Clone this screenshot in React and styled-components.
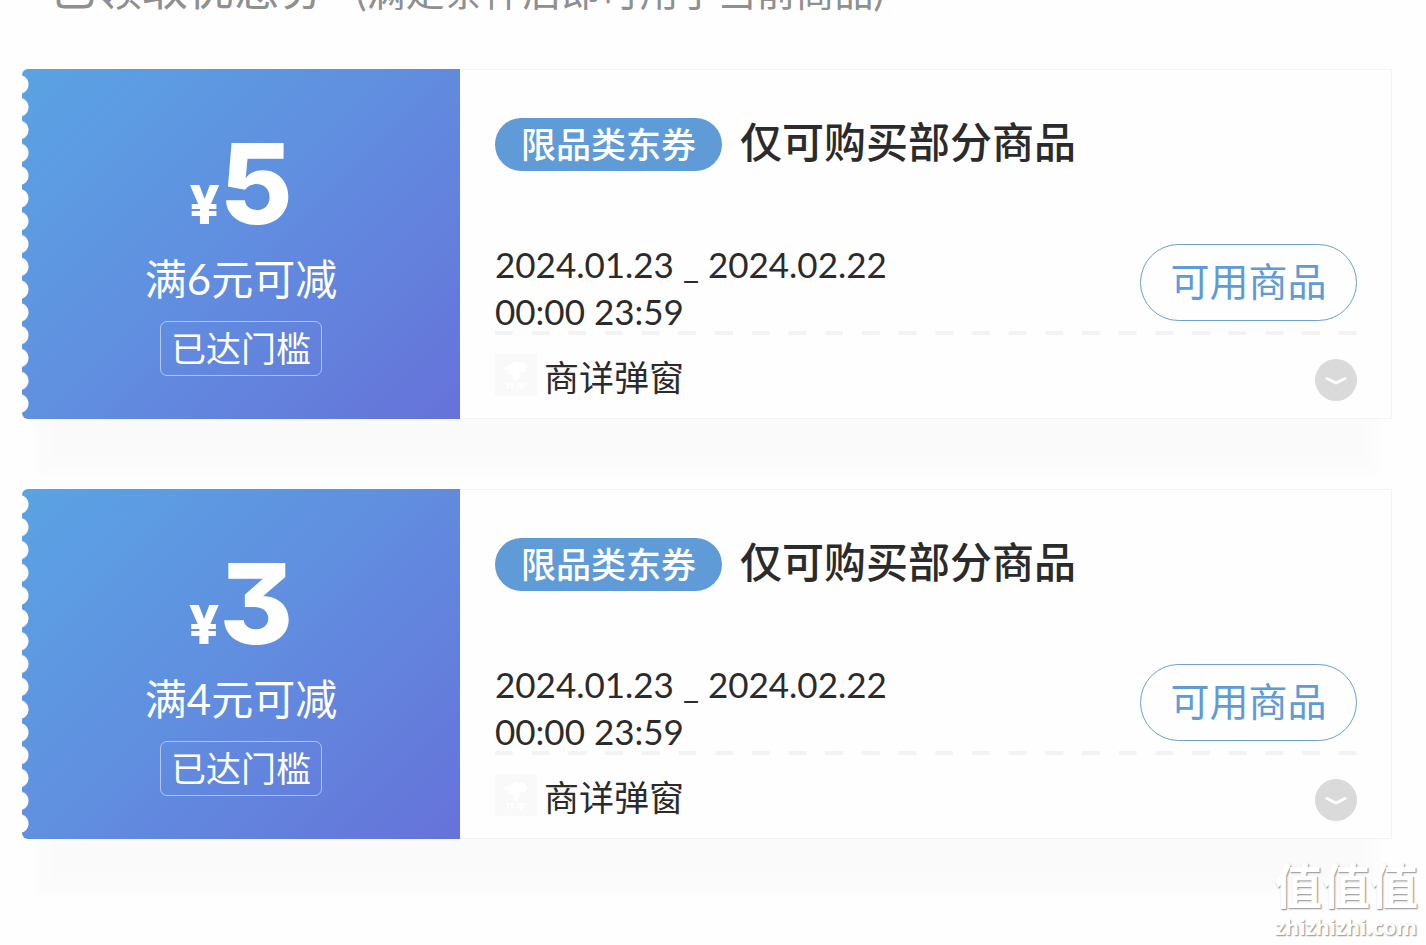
import React, { useState } from 'react';
import styled, { createGlobalStyle } from 'styled-components';

const GlobalStyle = createGlobalStyle`
    * {
        box-sizing: border-box;
    }

    body {
        margin: 0;
        background: #fefefe;
        color: #2b2b2b;
        font-family: Lato, 'Noto Sans CJK SC', sans-serif;
    }

    button {
        font-family: inherit;
        cursor: pointer;
    }
`;

const Page = styled.main`
    position: relative;
    min-height: 100vh;
    padding: 0 34px 106px 22px;
    overflow: hidden;
`;

const Header = styled.header`
    display: flex;
    align-items: flex-end;
    height: 20px;
    margin-bottom: 49px;
    padding-left: 28px;
    gap: 30px;
    color: #8f8f8f;
    overflow: hidden;
    white-space: nowrap;
`;

const Heading = styled.h1`
    margin: 0;
    font-size: 46px;
    font-weight: 400;
    line-height: 64px;
`;

const Hint = styled.span`
    font-size: 39px;
    line-height: 58px;
`;

const CouponList = styled.ul`
    display: flex;
    flex-direction: column;
    gap: 70px;
    margin: 0;
    padding: 0;
    list-style: none;
`;

const Coupon = styled.li`
    display: flex;
    box-shadow: 0 68px 12px -14px rgba(0, 0, 0, 0.014);
`;

const Stub = styled.div`
    display: flex;
    flex: 0 0 438px;
    border-radius: 6px 0 0 6px;
    background: linear-gradient(135deg, #5aa3e3 0%, #6090e0 45%, #6672d9 100%);
    color: #fff;
`;

const Perforation = styled.div`
    flex: 0 0 7px;
    margin: 4px 0;
    background: radial-gradient(circle at -3px 50%, #fefefe 9px, transparent 10px) 0 0 / 7px calc(100% / 15) repeat-y;
`;

const StubBody = styled.div`
    display: flex;
    flex: 1;
    flex-direction: column;
    align-items: center;
    padding: 72px 7px 0 0;
`;

const Amount = styled.div`
    display: flex;
    align-items: baseline;
    height: 84px;
    margin-bottom: 29px;
    font-family: Inter, 'Noto Sans CJK SC', sans-serif;
    font-feature-settings: 'cv09';
    font-weight: 800;
`;

const Currency = styled.span`
    font-size: 53px;
    line-height: 84px;
`;

const Value = styled.span`
    font-size: 112px;
    line-height: 84px;
`;

const Threshold = styled.div`
    margin-bottom: 17px;
    font-size: 42px;
    line-height: 50px;
`;

const Reached = styled.div`
    padding: 0 10px;
    border: 1px solid rgba(255, 255, 255, 0.5);
    border-radius: 7px;
    font-size: 35px;
    line-height: 53px;
`;

const Detail = styled.div`
    display: flex;
    flex: 1;
    flex-direction: column;
    min-width: 0;
    padding: 48px 34px 17px 35px;
    border: 1px solid #f3f3f3;
    border-left: 0;
    background: #fefefe;
`;

const TitleRow = styled.div`
    display: flex;
    align-items: flex-start;
    gap: 18px;
    height: 53px;
    margin-bottom: 70px;
`;

const Badge = styled.span`
    padding: 0 26px;
    border-radius: 27px;
    background: #5f9bd7;
    color: #fff;
    font-size: 35px;
    font-weight: 500;
    line-height: 53px;
`;

const Title = styled.h2`
    margin: 0;
    font-size: 42px;
    font-weight: 500;
    line-height: 48px;
`;

const DateRow = styled.div`
    display: flex;
    align-items: flex-start;
    justify-content: space-between;
    background: linear-gradient(90deg, #f3f3f5 18px, transparent 18px) 0 100% / calc((100% - 18px) / 23) 4px repeat-x;
`;

const Dates = styled.div`
    font-size: 35px;
    line-height: 47px;
`;

const UseButton = styled.button`
    width: 217px;
    height: 77px;
    margin-top: 3px;
    padding: 0 0 8px;
    border: 1px solid #6d9fd2;
    border-radius: 39px;
    background: transparent;
    color: #5f9bd7;
    font-size: 39px;
`;

const Footer = styled.div`
    display: flex;
    align-items: flex-start;
    gap: 7px;
    height: 66px;
    padding-top: 19px;
`;

const ShopIcon = styled.svg`
    width: 42px;
    height: 42px;
    background: #f9f9f9;
`;

const Source = styled.span`
    flex: 1;
    font-size: 35px;
    line-height: 47px;
`;

const Toggle = styled.button`
    display: flex;
    align-self: flex-end;
    width: 42px;
    height: 42px;
    padding: 0;
    border: 0;
    border-radius: 50%;
    background: #dadada;

    svg {
        transform: ${({ $open }) => ($open ? 'rotate(180deg)' : 'none')};
    }
`;

const Watermark = styled.div`
    position: absolute;
    right: 8px;
    bottom: 4px;
    color: #fff;
    text-align: center;
    text-shadow: 1px 1px 1px #a0a0a0, 1px 1px 2px #c4c4c4;
`;

const WatermarkName = styled.div`
    font-size: 48px;
    font-weight: 700;
    line-height: 54px;
`;

const WatermarkSite = styled.div`
    font-family: 'Open Sans', sans-serif;
    font-size: 21px;
    font-weight: 700;
    line-height: 28px;
`;

const coupons = [
    { id: 1, value: 5, threshold: '满6元可减' },
    { id: 2, value: 3, threshold: '满4元可减' },
];

const CouponCard = ({ value, threshold }) => {
    const [open, setOpen] = useState(false);

    return (
        <Coupon>
            <Stub>
                <Perforation />
                <StubBody>
                    <Amount>
                        <Currency>¥</Currency>
                        <Value>{value}</Value>
                    </Amount>
                    <Threshold>{threshold}</Threshold>
                    <Reached>已达门槛</Reached>
                </StubBody>
            </Stub>
            <Detail>
                <TitleRow>
                    <Badge>限品类东券</Badge>
                    <Title>仅可购买部分商品</Title>
                </TitleRow>
                <DateRow>
                    <Dates>
                        2024.01.23 _ 2024.02.22
                        <br />
                        00:00 23:59
                    </Dates>
                    <UseButton type="button">可用商品</UseButton>
                </DateRow>
                <Footer>
                    <ShopIcon viewBox="0 0 42 42" aria-hidden="true">
                        <path d="M9 14c3-1 4-4 8-4 2-3 6-3 8-1 3-2 7 0 7 4 0 4-3 5-6 5l-2 2 1 4-4 3-4-2 2-3-2-2-4 1 1-4-5-1z" fill="#fff" />
                        <path d="M11 30h8M13 30v5M17 30v5M22 30h9M26 30v6M22 33h8" stroke="#fff" strokeWidth="1.5" fill="none" />
                    </ShopIcon>
                    <Source>商详弹窗</Source>
                    <Toggle type="button" aria-label="展开" aria-expanded={open} $open={open} onClick={() => setOpen(!open)}>
                        <svg width="42" height="42" viewBox="0 0 42 42" fill="none">
                            <path d="M12 19.5l9 4.5 9-4.5" stroke="#fff" strokeWidth="3" strokeLinecap="round" strokeLinejoin="round" />
                        </svg>
                    </Toggle>
                </Footer>
            </Detail>
        </Coupon>
    );
};

const App = () => {
    return (
        <Page>
            <GlobalStyle />
            <Header>
                <Heading>已领取优惠券</Heading>
                <Hint>(满足条件后即可用于当前商品)</Hint>
            </Header>
            <CouponList>
                {coupons.map((coupon) => (
                    <CouponCard key={coupon.id} value={coupon.value} threshold={coupon.threshold} />
                ))}
            </CouponList>
            <Watermark>
                <WatermarkName>值值值</WatermarkName>
                <WatermarkSite>zhizhizhi.com</WatermarkSite>
            </Watermark>
        </Page>
    );
};

export default App;
